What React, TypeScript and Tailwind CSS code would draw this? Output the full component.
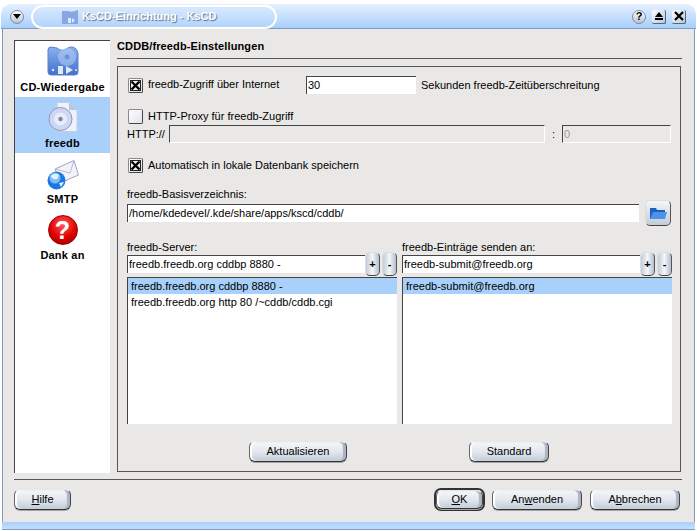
import type { ReactNode } from "react";

const font = "[font-family:'Liberation_Sans',Arial,sans-serif]";

function Key({ c }: { c: string }) {
  return <span className="underline">{c}</span>;
}

function Btn({ w, h = "h-[21px]", children }: { w: string; h?: string; children: ReactNode }) {
  return (
    <button
      type="button"
      className={`${w} ${h} shrink-0 rounded-[6px] border border-[#e8e8e8] border-b-[#333] border-r-[#444] border-l-[#666] bg-gradient-to-b from-[#f4f6f9] via-[#e3e8ef] to-[#c3ccd8] text-[11px] leading-none text-black shadow-[inset_2px_0_1px_#fff,inset_-3px_0_1px_#aab4c2,0_1px_0_#a5a5a5] flex items-center justify-center`}
    >
      {children}
    </button>
  );
}

function SmallBtn({ label }: { label: string }) {
  return (
    <button
      type="button"
      className="w-[15px] h-[24px] shrink-0 rounded-[5px] border border-[#ddd] border-b-[#444] border-r-[#555] bg-gradient-to-r from-[#c3ccd8] via-[#f4f6f9] to-[#b5bfcd] text-[11px] font-bold leading-none text-black flex items-center justify-center"
    >
      {label}
    </button>
  );
}

function Check({ checked }: { checked?: boolean }) {
  return (
    <span className="ml-[1px] w-[15px] h-[15px] shrink-0 rounded-[2px] border border-[#8a8a8a] border-r-[#444] border-b-[#444] bg-gradient-to-br from-white to-[#dfe3ea] flex items-center justify-center">
      {checked && (
        <svg width="11" height="11" viewBox="0 0 11 11">
          <path d="M1.5 1.5 9.5 9.5M9.5 1.5 1.5 9.5" stroke="#000" strokeWidth="2.4" />
          <rect x="0.5" y="0.5" width="10" height="10" fill="none" stroke="#222" />
        </svg>
      )}
    </span>
  );
}

function TextInput({ value, className }: { value: string; className: string }) {
  return (
    <div className={`${className} h-[18px] bg-white border-t border-l border-[#444] pl-[1px] text-[11px] leading-[17px] text-black whitespace-nowrap overflow-hidden`}>
      {value}
    </div>
  );
}

function FolderCdIcon() {
  return (
    <svg width="32" height="30" viewBox="0 0 32 30">
      <defs>
        <linearGradient id="fc" x1="0" y1="0" x2="0" y2="1">
          <stop offset="0" stopColor="#8cb0ee" />
          <stop offset="1" stopColor="#3f70cc" />
        </linearGradient>
      </defs>
      <path d="M1 4 Q1 1 4 1 L10 2 Q15 6 19 3 Q25 -1 29 3 Q31 5 31 8 L31 26 Q31 29 28 29 L4 29 Q1 29 1 26 Z" fill="url(#fc)" stroke="#5b82cf" />
      <circle cx="20" cy="11" r="9" fill="#b4cdf6" opacity="0.55" />
      <circle cx="20" cy="11" r="2.5" fill="#6b92dc" />
      <rect x="11" y="20" width="5" height="8" fill="#dfe9fb" />
      <path d="M19 20 L26 24 19 28Z" fill="#dfe9fb" />
      <circle cx="6" cy="24" r="1.2" fill="#dfe9fb" />
      <circle cx="29" cy="24" r="1" fill="#dfe9fb" />
    </svg>
  );
}

function DocCdIcon() {
  return (
    <svg width="30" height="30" viewBox="0 0 30 30">
      <path d="M9 0.5 H21 L29 8 V29.5 H9 Z" fill="#eef2fa" stroke="#c4cde0" />
      <path d="M21 0.5 V8 H29 Z" fill="#b9c6de" />
      <circle cx="12.5" cy="17" r="11.5" fill="#cdd6f3" stroke="#8d97bd" />
      <circle cx="12.5" cy="17" r="6.5" fill="#e7ebfb" />
      <circle cx="12.5" cy="17" r="2.2" fill="#7d86a8" />
    </svg>
  );
}

function MailIcon() {
  return (
    <svg width="32" height="30" viewBox="0 0 32 30">
      <path d="M8 9 L27 0.5 L31.5 15 L13 23 Z" fill="#f1f2fa" stroke="#9ea4c2" />
      <path d="M8 9 L23 13 L27 0.5" fill="none" stroke="#b5b9d3" />
      <circle cx="9.5" cy="20.5" r="9" fill="#1c78e6" />
      <circle cx="8" cy="18" r="5.5" fill="#7fbdf8" />
      <path d="M4 16 Q8 12 12 15 L10 19 Q6 20 4 16Z M12 23 L17 22 L14 27Z" fill="#e8f4ff" />
    </svg>
  );
}

function HelpIcon() {
  return (
    <span className="w-[30px] h-[30px] rounded-full bg-[radial-gradient(circle_at_50%_30%,#ff5a5a,#e00000_55%,#8f0000)] border border-[#900] flex items-center justify-center text-white font-bold text-[25px] leading-none">
      ?
    </span>
  );
}

function NavItem({ icon, label, active, h, gap }: { icon: ReactNode; label: string; active?: boolean; h: string; gap: string }) {
  return (
    <div className={`${h} flex flex-col items-center justify-end pb-[3px] ${active ? "bg-[#a8d0fb]" : ""}`}>
      {icon}
      <span className={`${gap} text-[11px] font-bold leading-[13px] tracking-[0.2px] text-black whitespace-nowrap`}>{label}</span>
    </div>
  );
}

function TitleButton({ children }: { children: ReactNode }) {
  return (
    <span className="w-[14px] h-[14px] rounded-[2px] bg-gradient-to-br from-white to-[#b9c8dc] border-b border-r border-[#56657a] flex items-center justify-center">
      {children}
    </span>
  );
}

export default function App() {
  return (
    <div className={`${font} w-[697px] h-[531px] overflow-hidden bg-white flex flex-col text-[11px] text-black`}>
      {/* title bar */}
      <header className="h-[25px] ml-[1px] mr-[1px] mt-[4px] rounded-t-[10px] border-t border-[#e4f0ff] bg-gradient-to-b from-[#e2efff] to-[#a9cffa] border-b border-b-[#7d9cc4] flex items-center pl-[9px] pr-[10px] shrink-0">
        <span className="w-[14px] h-[14px] rounded-full bg-gradient-to-b from-white to-[#b9c4d6] border border-[#7c8ba3] flex items-center justify-center">
          <span className="w-0 h-0 border-x-[4px] border-x-transparent border-t-[5px] border-t-black" />
        </span>
        <div className="ml-[7px] w-[246px] h-[24px] rounded-full border-2 border-white bg-gradient-to-b from-[#d8e9fe] to-[#b2d4fb] flex items-center pl-[28px] gap-[3px]">
          <svg width="18" height="16" viewBox="0 0 18 16">
            <path d="M1 2 H7 Q10 4 17 1 V15 H1Z" fill="#86a8e2" />
            <rect x="7" y="9" width="3" height="5" fill="#dfe9fb" />
            <path d="M11 9 L14 11.5 11 14Z" fill="#dfe9fb" />
          </svg>
          <span className="text-[11px] font-bold text-white [text-shadow:1px_1px_1px_#5b7396] whitespace-nowrap">KsCD-Einrichtung - KsCD</span>
        </div>
        <div className="ml-auto flex items-center gap-[6px]">
          <span className="w-[14px] h-[14px] rounded-full bg-gradient-to-b from-white to-[#b9c4d6] border border-[#7c8ba3] flex items-center justify-center text-[11px] font-bold leading-none">?</span>
          <TitleButton>
            <span className="flex flex-col items-center gap-[1px]">
              <span className="w-0 h-0 border-x-[4px] border-x-transparent border-b-[5px] border-b-black" />
              <span className="w-[8px] h-[2px] bg-black" />
            </span>
          </TitleButton>
          <TitleButton>
            <svg width="10" height="10" viewBox="0 0 10 10">
              <path d="M1 1 9 9M9 1 1 9" stroke="#000" strokeWidth="2.2" />
            </svg>
          </TitleButton>
        </div>
      </header>

      {/* window body */}
      <div className="flex-1 mx-[2px] border-x border-[#7d9cc4] bg-[#e9e8e6] px-[11px] pt-[11px] flex flex-col min-h-0">
        <div className="flex h-[433px] gap-[7px]">
          <nav className="w-[96px] shrink-0 bg-white border-t border-l border-[#444]">
            <NavItem h="h-[56px]" gap="mt-[5px]" icon={<FolderCdIcon />} label="CD-Wiedergabe" />
            <NavItem h="h-[56px]" gap="mt-[5px]" active icon={<DocCdIcon />} label="freedb" />
            <NavItem h="h-[56px]" gap="mt-[3px]" icon={<MailIcon />} label="SMTP" />
            <NavItem h="h-[56px]" gap="mt-[4px]" icon={<HelpIcon />} label="Dank an" />
          </nav>

          <section className="flex-1 flex flex-col min-w-0">
            <h2 className="h-[19px] mr-[1px] border-b border-[#555] text-[11px] font-bold leading-[13px] tracking-[0.12px]">CDDB/freedb-Einstellungen</h2>
            <div className="mt-[7px] mr-[2px] h-[406px] border border-[#555] pl-[9px] pr-[9px] pt-[9px]">
              <div className="flex items-center h-[18px]">
                <Check checked />
                <span className="ml-[5px] w-[158px] pb-[2px]">freedb-Zugriff über Internet</span>
                <TextInput value="30" className="w-[110px]" />
                <span className="ml-[5px]">Sekunden freedb-Zeitüberschreitung</span>
              </div>
              <div className="flex items-center h-[15px] mt-[15px]">
                <Check />
                <span className="ml-[5px]">HTTP-Proxy für freedb-Zugriff</span>
              </div>
              <div className="flex items-center mt-[1px] h-[18px]">
                <span className="w-[42px]">HTTP://</span>
                <div className="w-[376px] h-[18px] border-t border-l border-[#444] border-r border-b border-r-white border-b-white bg-[#e9e8e6]" />
                <span className="w-[17px] text-center">:</span>
                <div className="w-[109px] h-[18px] border-t border-l border-[#444] border-r border-b border-r-white border-b-white bg-[#e9e8e6] pl-[1px] leading-[16px] text-[#9a9a9a]">0</div>
              </div>
              <div className="flex items-center h-[15px] mt-[15px]">
                <Check checked />
                <span className="ml-[5px]">Automatisch in lokale Datenbank speichern</span>
              </div>
              <div className="mt-[15px] h-[13px] leading-[13px]">freedb-Basisverzeichnis:</div>
              <div className="flex items-center -mt-[1px] h-[26px]">
                <TextInput value="/home/kdedevel/.kde/share/apps/kscd/cddb/" className="w-[513px]" />
                <button type="button" className="ml-[6px] w-[26px] h-[26px] rounded-[5px] border border-[#ddd] border-b-[#444] border-r-[#555] bg-gradient-to-b from-[#f4f6f9] to-[#c3ccd8] flex items-center justify-center">
                  <svg width="18" height="14" viewBox="0 0 18 14">
                    <path d="M1 2 H7 L8 4 H16 V13 H1Z" fill="#1f5fc0" />
                    <path d="M4 6 H18 L16 13 H1Z" fill="#4d94e6" />
                  </svg>
                </button>
              </div>
              <div className="grid grid-cols-[270px_270px] gap-x-[5px] mt-[15px]">
                {[
                  { label: "freedb-Server:", value: "freedb.freedb.org cddbp 8880 -", items: ["freedb.freedb.org cddbp 8880 -", "freedb.freedb.org http 80 /~cddb/cddb.cgi"] },
                  { label: "freedb-Einträge senden an:", value: "freedb-submit@freedb.org", items: ["freedb-submit@freedb.org"] },
                ].map((col) => (
                  <div key={col.label} className="flex flex-col">
                    <div className="h-[13px] leading-[13px]">{col.label}</div>
                    <div className="flex items-center h-[24px] -mt-[2px] mb-[1px]">
                      <TextInput value={col.value} className="w-[238px]" />
                      <span className="flex gap-[2px]">
                        <SmallBtn label="+" />
                        <SmallBtn label="-" />
                      </span>
                    </div>
                    <div className="h-[147px] bg-white border-t border-l border-[#444]">
                      {col.items.map((item, i) => (
                        <div key={item} className={`h-[16px] pl-[3px] leading-[16px] whitespace-nowrap ${i === 0 ? "bg-[#a8d0fb]" : ""}`}>
                          {item}
                        </div>
                      ))}
                    </div>
                  </div>
                ))}
              </div>
              <div className="flex justify-evenly mt-[17px]">
                <Btn w="w-[98px]">Aktualisieren</Btn>
                <Btn w="w-[80px]">Standard</Btn>
              </div>
            </div>
          </section>
        </div>

        <div className="h-[2px] mt-[6px] mr-[1px] border-t border-[#555] border-b-white" />
        <footer className="flex items-center mt-[8px] h-[21px]">
          <Btn w="w-[57px]"><span><Key c="H" />ilfe</span></Btn>
          <div className="ml-auto flex items-center mr-[3px]">
            <span className="rounded-[7px] border-2 border-[#333] mr-[7px] flex">
              <Btn w="w-[47px]" h="h-[19px]"><span><Key c="O" />K</span></Btn>
            </span>
            <Btn w="w-[90px]"><span>An<Key c="w" />enden</span></Btn>
            <span className="w-[8px]" />
            <Btn w="w-[90px]"><span>A<Key c="b" />brechen</span></Btn>
          </div>
        </footer>
        <div className="flex-1" />
      </div>
      <div className="h-[8px] mx-[2px] bg-gradient-to-b from-[#a9cffa] to-[#c4dffc] border-b border-[#7d9cc4] shrink-0 mb-[1px]" />
    </div>
  );
}
